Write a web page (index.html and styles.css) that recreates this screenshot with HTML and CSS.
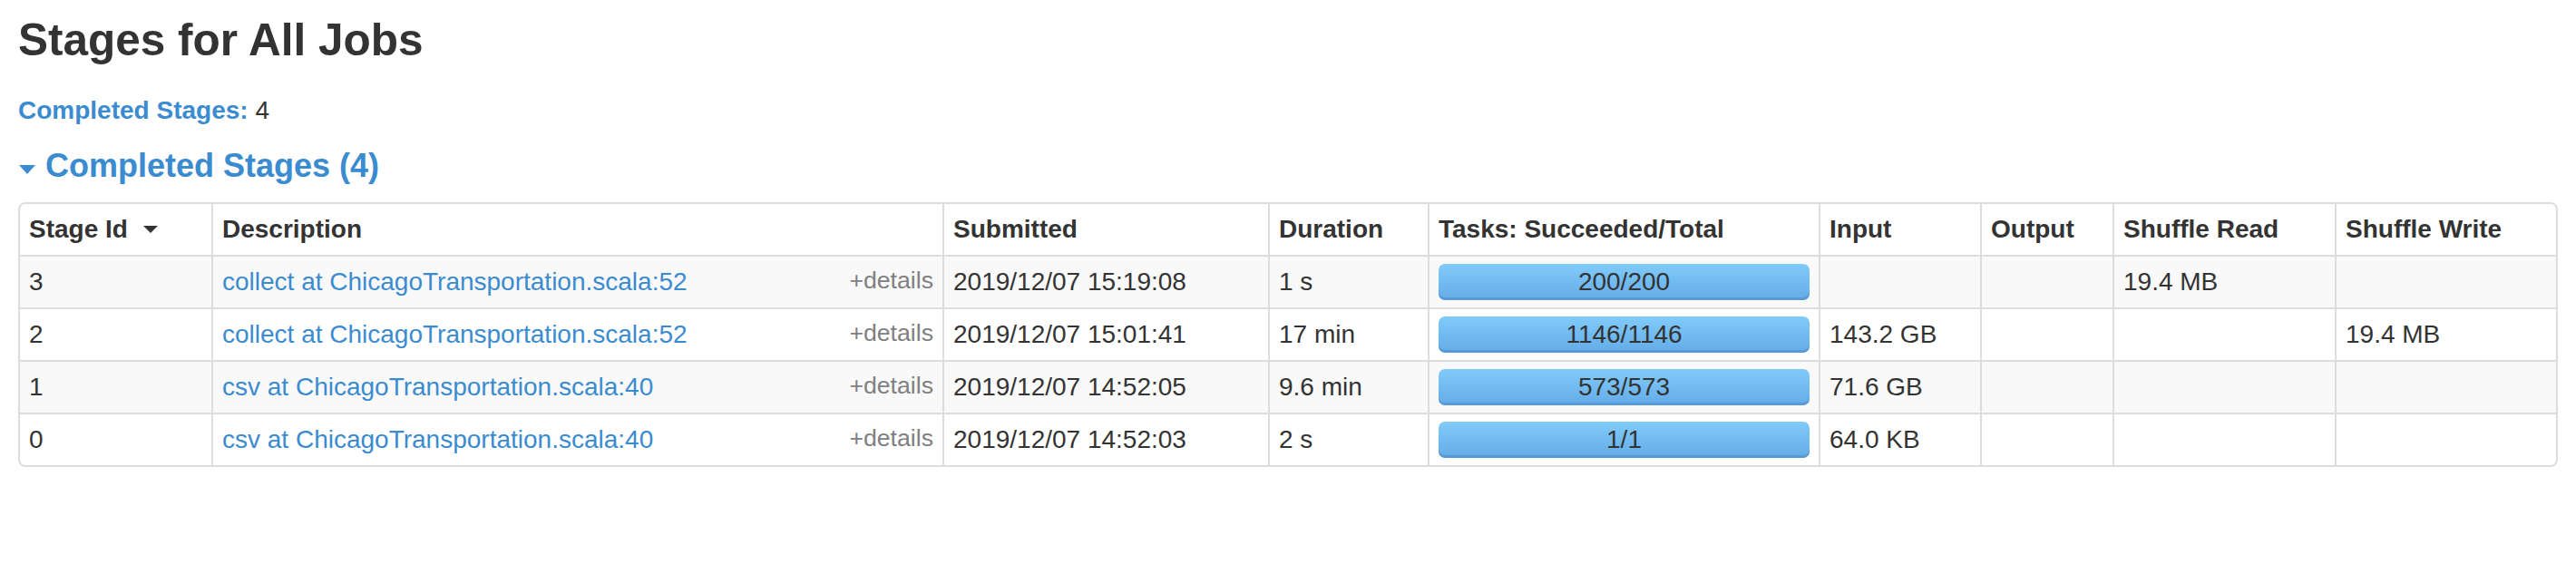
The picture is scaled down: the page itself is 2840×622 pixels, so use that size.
FILE: index.html
```html
<!DOCTYPE html>
<html>
<head>
<meta charset="utf-8">
<title>Stages for All Jobs</title>
<link rel="stylesheet" href="styles.css">
</head>
<body>
  <h3 class="page-title">Stages for All Jobs</h3>
  <ul class="summary">
    <li><a class="summary-link" href="#completed"><strong>Completed Stages:</strong></a> 4</li>
  </ul>
  <h4 class="section-title"><span class="arrow-open"></span><a class="section-link" href="#completed">Completed Stages (4)</a></h4>
  <table class="stages">
    <colgroup>
      <col class="c-id">
      <col class="c-desc">
      <col class="c-sub">
      <col class="c-dur">
      <col class="c-tasks">
      <col class="c-in">
      <col class="c-out">
      <col class="c-sr">
      <col class="c-sw">
    </colgroup>
    <thead>
      <tr>
        <th>Stage Id<svg class="sort-arrow" width="16" height="8" viewBox="0 0 16 8"><path d="M0 0 H16 L8 8 Z" fill="#333"/></svg></th>
        <th>Description</th>
        <th>Submitted</th>
        <th>Duration</th>
        <th>Tasks: Succeeded/Total</th>
        <th>Input</th>
        <th>Output</th>
        <th>Shuffle Read</th>
        <th>Shuffle Write</th>
      </tr>
    </thead>
    <tbody>
      <tr class="odd">
        <td>3</td>
        <td><div class="desc"><a class="name-link" href="#s3">collect at ChicagoTransportation.scala:52</a><span class="expand-details">+details</span></div></td>
        <td>2019/12/07 15:19:08</td>
        <td>1 s</td>
        <td><div class="progress">200/200</div></td>
        <td></td>
        <td></td>
        <td>19.4 MB</td>
        <td></td>
      </tr>
      <tr>
        <td>2</td>
        <td><div class="desc"><a class="name-link" href="#s2">collect at ChicagoTransportation.scala:52</a><span class="expand-details">+details</span></div></td>
        <td>2019/12/07 15:01:41</td>
        <td>17 min</td>
        <td><div class="progress">1146/1146</div></td>
        <td>143.2 GB</td>
        <td></td>
        <td></td>
        <td>19.4 MB</td>
      </tr>
      <tr class="odd">
        <td>1</td>
        <td><div class="desc"><a class="name-link" href="#s1">csv at ChicagoTransportation.scala:40</a><span class="expand-details">+details</span></div></td>
        <td>2019/12/07 14:52:05</td>
        <td>9.6 min</td>
        <td><div class="progress">573/573</div></td>
        <td>71.6 GB</td>
        <td></td>
        <td></td>
        <td></td>
      </tr>
      <tr>
        <td>0</td>
        <td><div class="desc"><a class="name-link" href="#s0">csv at ChicagoTransportation.scala:40</a><span class="expand-details">+details</span></div></td>
        <td>2019/12/07 14:52:03</td>
        <td>2 s</td>
        <td><div class="progress">1/1</div></td>
        <td>64.0 KB</td>
        <td></td>
        <td></td>
        <td></td>
      </tr>
    </tbody>
  </table>
</body>
</html>
```
FILE: styles.css
```css
html, body {
  margin: 0;
  background: #ffffff;
}
body {
  padding: 0 20px;
  font-family: "Liberation Sans", Arial, sans-serif;
  font-size: 28px;
  line-height: 40px;
  color: #333333;
}
a {
  color: #3b8bd0;
  text-decoration: none;
}
.page-title {
  margin: 4px 0 0;
  font-size: 49.5px;
  line-height: 80px;
  font-weight: bold;
  color: #333333;
}
.summary {
  list-style: none;
  margin: 18px 0 0;
  padding: 0;
}
.summary strong {
  font-weight: bold;
}
.section-title {
  display: flex;
  align-items: flex-start;
  margin: 21px 0 0;
  font-size: 36px;
  line-height: 40px;
  font-weight: bold;
}
.arrow-open {
  width: 0;
  height: 0;
  border-left: 9px solid transparent;
  border-right: 9px solid transparent;
  border-top: 10px solid #3b8bd0;
  margin: 19px 11px 0 1px;
}
.stages {
  width: 100%;
  margin-top: 20px;
  table-layout: fixed;
  border-collapse: separate;
  border-spacing: 0;
  border: 2px solid #dddddd;
  border-radius: 8px;
}
.c-id { width: 211px; }
.c-desc { width: 806px; }
.c-sub { width: 359px; }
.c-dur { width: 176px; }
.c-tasks { width: 431px; }
.c-in { width: 178px; }
.c-out { width: 146px; }
.c-sr { width: 245px; }
.c-sw { width: 244px; }
.stages th,
.stages td {
  padding: 8px 10px;
  text-align: left;
  vertical-align: top;
  line-height: 40px;
  height: 40px;
  border-left: 2px solid #dddddd;
  border-top: 2px solid #dddddd;
  white-space: nowrap;
}
.stages th {
  font-weight: bold;
  border-top: 0;
}
.stages th:first-child,
.stages td:first-child {
  border-left: 0;
}
.stages tr.odd td {
  background: #f9f9f9;
}
.stages tbody tr:last-child td:first-child {
  border-bottom-left-radius: 6px;
}
.sort-arrow {
  margin-left: 17px;
  vertical-align: 5px;
}
.desc {
  display: flex;
  justify-content: space-between;
  align-items: flex-start;
}
.expand-details {
  font-size: 26.67px;
  color: #808080;
  margin-top: -2px;
}
.progress {
  height: 40px;
  box-sizing: border-box;
  border-radius: 7px;
  background: linear-gradient(to bottom, #80cbfa 0%, #64abe7 100%);
  box-shadow: inset 0 -3px 0 rgba(40, 90, 150, 0.22);
  text-align: center;
  line-height: 39px;
  color: #333333;
}
```
